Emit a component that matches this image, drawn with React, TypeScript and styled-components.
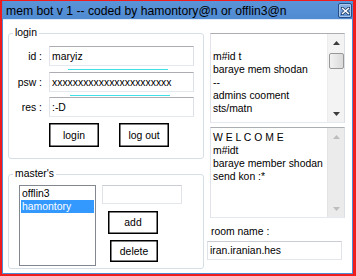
import React from 'react';
import styled, { createGlobalStyle } from 'styled-components';

const Global = createGlobalStyle`
  html, body { margin: 0; padding: 0; background: #ffffff; }
  body { font-family: "Liberation Sans", Arial, sans-serif; font-size: 10.4px; color: #000; }
  * { box-sizing: border-box; }
`;

const Window = styled.div`
  width: 356px;
  height: 276px;
  border: solid #ee1c1c;
  border-width: 1px 3px 2px 2px;
  background: #4f8ad2;
  padding: 0 1px 1px 1px;
  display: flex;
  flex-direction: column;
`;

const TitleBar = styled.div`
  height: 18px;
  flex: none;
  display: flex;
  align-items: center;
  justify-content: space-between;
  padding: 0 0 0 3px;
  background: linear-gradient(#5b94d8, #4f8ad2);
`;

const Title = styled.span`
  font-size: 12.2px;
  color: #000;
  white-space: nowrap;
  margin-top: 1px;
`;

const CloseButton = styled.div`
  width: 14px;
  height: 15px;
  margin-top: 1px;
  border: 1px solid #234f86;
  border-radius: 2px;
  background: linear-gradient(#8db4e4, #5e91d2);
  box-shadow: inset 0 0 0 1px #a9c6ec;
  display: flex;
  align-items: center;
  justify-content: center;
`;

const Client = styled.div`
  flex: 1;
  background: #ffffff;
  border-top: 1px solid #dfe8f3;
  display: flex;
  align-items: flex-start;
  padding: 0 0 0 5px;
`;

const LeftCol = styled.div`
  width: 196px;
  flex: none;
  display: flex;
  flex-direction: column;
`;

const Group = styled.fieldset<{ $top: number; $bottom: number }>`
  margin: ${(p) => p.$top}px 0 0 0;
  padding: 0 0 ${(p) => p.$bottom}px 0;
  border: 1px solid #d5dfe5;
  border-radius: 3px;
  min-width: 0;
`;

const Legend = styled.legend`
  margin-left: 4px;
  padding: 0 2px;
  line-height: 12px;
  font-size: 10.4px;
  color: #000;
`;

const FormStack = styled.div`
  display: flex;
  flex-direction: column;
  padding-top: 7px;
`;

const FieldRow = styled.div`
  display: flex;
  align-items: center;
  height: 20px;
`;

const FieldLabel = styled.span`
  width: 33px;
  margin-right: 7px;
  text-align: right;
  white-space: nowrap;
`;

const TextBox = styled.input<{ $w: number; $h: number; $soft?: boolean }>`
  width: ${(p) => p.$w}px;
  height: ${(p) => p.$h}px;
  margin: 0;
  padding: 0 2px;
  border: 1px solid;
  border-color: ${(p) =>
    p.$soft ? '#c9cdd3 #dfe2e7 #e3e6ea #dfe2e7' : '#abadb3 #dbdfe6 #e3e9ef #e2e3ea'};
  background: #fff;
  font-family: "Liberation Sans", Arial, sans-serif;
  font-size: 10.4px;
  color: #000;
  outline: none;
`;

const Underline = styled.div<{ $m: string }>`
  height: 1px;
  width: 100px;
  background: #3fe0e8;
  margin: ${(p) => p.$m};
`;

const ButtonRow = styled.div`
  display: flex;
  gap: 20px;
  margin: 6px 0 0 40px;
`;

const FlatButton = styled.button<{ $w: number; $h: number; $ml?: number; $mt?: number }>`
  width: ${(p) => p.$w}px;
  height: ${(p) => p.$h}px;
  margin: ${(p) => p.$mt ?? 0}px 0 0 ${(p) => p.$ml ?? 0}px;
  padding: 0;
  border: 1px solid #000;
  box-shadow: inset 0 0 0 0.5px #000;
  background: #fff;
  font-family: "Liberation Sans", Arial, sans-serif;
  font-size: 10.4px;
  color: #000;
`;

const MasterBody = styled.div`
  display: flex;
  padding: 5px 0 0 10px;
  gap: 6px;
`;

const ListBox = styled.div`
  width: 77px;
  height: 81px;
  border: 1px solid #828790;
  padding: 1px;
  background: #fff;
`;

const ListItem = styled.div<{ $selected?: boolean }>`
  height: 13px;
  line-height: 13px;
  padding-left: 1px;
  background: ${(p) => (p.$selected ? '#3399ff' : 'transparent')};
  color: ${(p) => (p.$selected ? '#fff' : '#000')};
`;

const MasterSide = styled.div`
  display: flex;
  flex-direction: column;
  align-items: flex-start;
`;

const RightCol = styled.div`
  width: 138px;
  margin-left: 3px;
  padding-top: 13px;
  display: flex;
  flex-direction: column;
  align-items: flex-start;
`;

const Memo = styled.div<{ $h: number; $mt: number }>`
  width: 135px;
  height: ${(p) => p.$h}px;
  margin: ${(p) => p.$mt}px 0 0 3px;
  border: 1px solid;
  border-color: #abadb3 #dbdfe6 #e3e9ef #e2e3ea;
  background: #fff;
  display: flex;
`;

const MemoText = styled.div`
  flex: 1;
  padding: 3px 2px 0 2px;
  line-height: 13px;
  white-space: pre;
  overflow: hidden;
`;

const ScrollBar = styled.div<{ $disabled?: boolean }>`
  width: 17px;
  flex: none;
  display: flex;
  flex-direction: column;
  background: ${(p) => (p.$disabled ? '#ebebeb' : '#f3f3f3')};
  border-left: 1px solid ${(p) => (p.$disabled ? '#e4e4e4' : '#ececec')};
`;

const ArrowCell = styled.div`
  height: 17px;
  flex: none;
  display: flex;
  align-items: center;
  justify-content: center;
`;

const Track = styled.div`
  flex: 1;
  display: flex;
  flex-direction: column;
  align-items: center;
`;

const Thumb = styled.div`
  width: 15px;
  height: 16px;
  margin-top: 2px;
  border: 1px solid #989898;
  border-radius: 2px;
  background: linear-gradient(90deg, #f2f2f2, #dadada);
`;

const RoomLabel = styled.div`
  margin: 7px 0 0 4px;
  line-height: 13px;
`;

const RoomBox = styled(TextBox)`
  margin-top: 3px;
`;

const Arrow = ({ up, color }: { up?: boolean; color: string }) => (
  <svg width="7" height="4" viewBox="0 0 7 4">
    {up ? <path d="M3.5 0 L7 4 L0 4 Z" fill={color} /> : <path d="M0 0 L7 0 L3.5 4 Z" fill={color} />}
  </svg>
);

const Scroll = ({ disabled }: { disabled?: boolean }) => {
  const c = disabled ? '#bdbdbd' : '#3c3c3c';
  return (
    <ScrollBar $disabled={disabled}>
      <ArrowCell>
        <Arrow up color={c} />
      </ArrowCell>
      <Track>{!disabled && <Thumb />}</Track>
      <ArrowCell>
        <Arrow color={c} />
      </ArrowCell>
    </ScrollBar>
  );
};

export default function App() {
  return (
    <>
      <Global />
      <Window>
        <TitleBar>
          <Title>mem bot v 1 -- coded by hamontory@n or offlin3@n</Title>
          <CloseButton>
            <svg width="9" height="8" viewBox="0 0 9 8">
              <path d="M1 1 L8 7 M8 1 L1 7" stroke="#1d3f6b" strokeWidth="3" strokeLinecap="square" />
              <path d="M1 1 L8 7 M8 1 L1 7" stroke="#ffffff" strokeWidth="1.6" />
            </svg>
          </CloseButton>
        </TitleBar>
        <Client>
          <LeftCol>
            <Group $top={7} $bottom={11}>
              <Legend>login</Legend>
              <FormStack>
                <FieldRow>
                  <FieldLabel>id :</FieldLabel>
                  <TextBox $w={145} $h={20} readOnly value="maryiz" />
                </FieldRow>
                <Underline $m="3px 0 2px 59px" />
                <FieldRow>
                  <FieldLabel>psw :</FieldLabel>
                  <TextBox $w={145} $h={20} readOnly value="xxxxxxxxxxxxxxxxxxxxxxx" />
                </FieldRow>
                <Underline $m="3px 0 1px 61px" />
                <FieldRow>
                  <FieldLabel>res :</FieldLabel>
                  <TextBox $w={145} $h={20} readOnly value=":-D" />
                </FieldRow>
                <ButtonRow>
                  <FlatButton $w={50} $h={24}>login</FlatButton>
                  <FlatButton $w={50} $h={24}>log out</FlatButton>
                </ButtonRow>
              </FormStack>
            </Group>
            <Group $top={9} $bottom={2}>
              <Legend>master's</Legend>
              <MasterBody>
                <ListBox>
                  <ListItem>offlin3</ListItem>
                  <ListItem $selected>hamontory</ListItem>
                </ListBox>
                <MasterSide>
                  <TextBox $w={80} $h={19} $soft readOnly value="" />
                  <FlatButton $w={50} $h={23} $ml={6} $mt={7}>add</FlatButton>
                  <FlatButton $w={48} $h={22} $ml={8} $mt={6}>delete</FlatButton>
                </MasterSide>
              </MasterBody>
            </Group>
          </LeftCol>
          <RightCol>
            <Memo $h={90} $mt={0}>
              <MemoText>{'\nm#id t\nbaraye mem shodan\n--\nadmins cooment\nsts/matn'}</MemoText>
              <Scroll />
            </Memo>
            <Memo $h={91} $mt={4}>
              <MemoText>{'W E L C O M E\nm#idt\nbaraye member shodan\nsend kon :*'}</MemoText>
              <Scroll disabled />
            </Memo>
            <RoomLabel>room name :</RoomLabel>
            <RoomBox $w={135} $h={19} $soft readOnly value="iran.iranian.hes" />
          </RightCol>
        </Client>
      </Window>
    </>
  );
}
